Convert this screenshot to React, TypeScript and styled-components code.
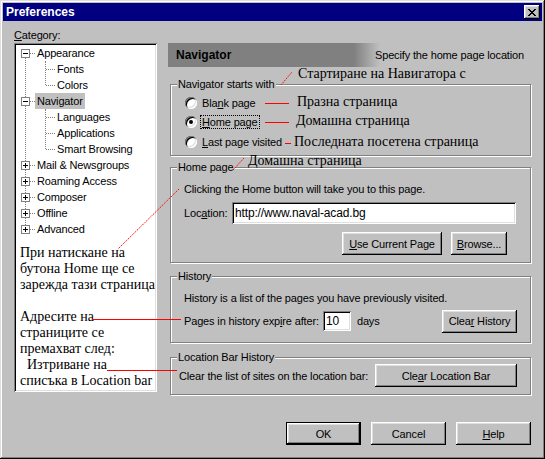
import styled, { createGlobalStyle } from 'styled-components';

const GlobalStyle = createGlobalStyle`
  html, body {
    margin: 0;
    padding: 0;
    background: #c0c0c0;
  }
  body {
    font-family: "Liberation Sans", Arial, sans-serif;
    font-size: 11px;
    letter-spacing: -0.15px;
    color: #000;
  }
  * {
    box-sizing: border-box;
  }
`;

type TreeItem = {
  label: string;
  expanded?: boolean;
  selected?: boolean;
  children?: string[];
};

const tree: TreeItem[] = [
  { label: 'Appearance', expanded: true, children: ['Fonts', 'Colors'] },
  {
    label: 'Navigator',
    expanded: true,
    selected: true,
    children: ['Languages', 'Applications', 'Smart Browsing'],
  },
  { label: 'Mail & Newsgroups' },
  { label: 'Roaming Access' },
  { label: 'Composer' },
  { label: 'Offline' },
  { label: 'Advanced' },
];

const notes = [
  { text: 'При натискане на' },
  { text: 'бутона Home ще се' },
  { text: 'зарежда тази страница' },
  { text: '' },
  { text: 'Адресите на' },
  { text: 'страниците се' },
  { text: 'премахват след:' },
  { text: 'Изтриване на', indent: 7 },
  { text: 'списъка в Location bar' },
];

const callouts = [
  { x: 298, y: 66, text: 'Стартиране на Навигатора с' },
  { x: 297, y: 94, text: 'Празна страница' },
  { x: 296, y: 113, text: 'Домашна страница' },
  { x: 294, y: 134, text: 'Последната посетена страница' },
  { x: 248, y: 153, text: 'Домашна страница' },
];

function CloseGlyph() {
  const rows = ['11000011', '01100110', '00111100', '00011000', '00111100', '01100110', '11000011'];
  return (
    <svg width="8" height="7" viewBox="0 0 8 7" shapeRendering="crispEdges">
      {rows.map((row, y) =>
        row.split('').map((c, x) => (c === '1' ? <rect key={`${x}-${y}`} x={x} y={y} width="1" height="1" fill="#000" /> : null)),
      )}
    </svg>
  );
}

function App() {
  return (
    <>
      <GlobalStyle />
      <Window>
        <TitleBar>
          <span>Preferences</span>
          <CloseButton>
            <CloseGlyph />
          </CloseButton>
        </TitleBar>

        <Body>
          <Main>
            <CategoryLabel>
              <U>C</U>ategory:
            </CategoryLabel>

            <TreeBox>
              <TreeList>
                {tree.map((item) => (
                  <div key={item.label}>
                    <TopRow>
                      <Expander $open={!!item.expanded} />
                      <Dash $width={5} />
                      <TreeLabel $selected={item.selected}>{item.label}</TreeLabel>
                    </TopRow>
                    {item.expanded && item.children && (
                      <ChildList>
                        {item.children.map((child) => (
                          <ChildRow key={child}>
                            <Dash $width={9} />
                            <TreeLabel>{child}</TreeLabel>
                          </ChildRow>
                        ))}
                      </ChildList>
                    )}
                  </div>
                ))}
              </TreeList>
              <Note>
                {notes.map((n, i) => (
                  <NoteLine key={i} $indent={n.indent ?? 0}>
                    {n.text || '\u00a0'}
                  </NoteLine>
                ))}
              </Note>
              <BorderMark />
            </TreeBox>

            <Panel>
              <PanelHeader>
                <PanelTitle>Navigator</PanelTitle>
                <span>Specify the home page location</span>
              </PanelHeader>

              <GroupBox $mt={17} $height={72}>
                <Legend>Navigator starts with</Legend>
                <RadioList>
                  <RadioRow>
                    <Radio />
                    <span>
                      Bla<U>n</U>k page
                    </span>
                  </RadioRow>
                  <RadioRow>
                    <Radio $checked />
                    <Focused>
                      <U>H</U>ome page
                    </Focused>
                  </RadioRow>
                  <RadioRow>
                    <Radio />
                    <span>
                      <U>L</U>ast page visited
                    </span>
                  </RadioRow>
                </RadioList>
              </GroupBox>

              <GroupBox $mt={11} $height={96}>
                <Legend>Home page</Legend>
                <TextLine $mt={8.5}>Clicking the Home button will take you to this page.</TextLine>
                <FieldRow $mt={5.5} $pr={14}>
                  <span>
                    Loc<U>a</U>tion:
                  </span>
                  <TextInput $width={284} $height={22} $push defaultValue="http://www.naval-acad.bg" />
                </FieldRow>
                <ButtonRow $mt={8} $pr={23}>
                  <Button $width={100}>
                    <U>U</U>se Current Page
                  </Button>
                  <Button $width={56}>
                    <U>B</U>rowse...
                  </Button>
                </ButtonRow>
              </GroupBox>

              <GroupBox $mt={13} $height={67}>
                <Legend>History</Legend>
                <TextLine $mt={8.5}>History is a list of the pages you have previously visited.</TextLine>
                <FieldRow $mt={5} $pr={13}>
                  <span>
                    Pages in history exp<U>i</U>re after:
                  </span>
                  <TextInput $width={28} $height={20} $gap={4} defaultValue="10" />
                  <Days>days</Days>
                  <Button $width={75} $push>
                    Clea<U>r</U> History
                  </Button>
                </FieldRow>
              </GroupBox>

              <GroupBox $mt={14} $height={38}>
                <Legend>Location Bar History</Legend>
                <FieldRow $mt={0} $pl={8} $pr={13}>
                  <span>Clear the list of sites on the location bar:</span>
                  <Button $width={142} $push>
                    Cle<U>a</U>r Location Bar
                  </Button>
                </FieldRow>
              </GroupBox>
            </Panel>
          </Main>

          <Footer>
            <Button $width={75} $default>
              OK
            </Button>
            <Button $width={75}>Cancel</Button>
            <Button $width={75}>
              <U>H</U>elp
            </Button>
          </Footer>
        </Body>

        <Overlay>
          <svg width="545" height="459" viewBox="0 0 545 459">
            <g stroke="#ff0000" strokeWidth="1" fill="none">
              <line x1="281" y1="85" x2="292" y2="72" strokeDasharray="1.5 1" />
              <line x1="265" y1="103.5" x2="289" y2="103.5" />
              <line x1="265" y1="122.5" x2="289" y2="122.5" />
              <line x1="285" y1="143.5" x2="291" y2="143.5" />
              <line x1="233" y1="170" x2="244" y2="158" strokeDasharray="1.5 1" />
              <line x1="179" y1="189" x2="118" y2="249" strokeDasharray="1.5 1" />
              <line x1="92" y1="319.5" x2="181" y2="319.5" />
              <line x1="107" y1="370.5" x2="177" y2="370.5" />
            </g>
          </svg>
          {callouts.map((c, i) => (
            <Callout key={i} $x={c.x} $y={c.y}>
              {c.text}
            </Callout>
          ))}
        </Overlay>
      </Window>
    </>
  );
}

export default App;

const serif = `"Liberation Serif", "DejaVu Serif", "Times New Roman", serif`;

const raised = `
  box-shadow: inset -1px -1px #000, inset 1px 1px #fff, inset -2px -2px #808080, inset 2px 2px #dfdfdf;
`;

const sunken = `
  box-shadow: inset 1px 1px #808080, inset -1px -1px #fff, inset 2px 2px #000, inset -2px -2px #dfdfdf;
`;

const Window = styled.div`
  position: relative;
  width: 545px;
  height: 459px;
  padding: 3px;
  display: flex;
  flex-direction: column;
  background: #c0c0c0;
  box-shadow: inset -1px -1px #000, inset 1px 1px #dfdfdf, inset -2px -2px #808080, inset 2px 2px #fff;
`;

const TitleBar = styled.div`
  height: 18px;
  display: flex;
  align-items: center;
  justify-content: space-between;
  padding: 0 2px 0 3px;
  background: #000080;
  color: #fff;
  font-weight: bold;
  font-size: 12px;
  letter-spacing: 0;
`;

const CloseButton = styled.div`
  width: 16px;
  height: 14px;
  display: flex;
  align-items: center;
  justify-content: center;
  background: #c0c0c0;
  ${raised}
`;

const Body = styled.div`
  flex: 1;
  display: flex;
  flex-direction: column;
  padding: 7px 10px 11px 11px;
`;

const Main = styled.div`
  display: grid;
  grid-template-columns: 143px 364px;
  grid-template-rows: 15px auto;
  column-gap: 11px;
`;

const CategoryLabel = styled.div`
  grid-column: 1;
  grid-row: 1;
  line-height: 13px;
  margin-top: 1px;
`;

const U = styled.span`
  text-decoration: underline;
  text-underline-offset: 1px;
`;

const TreeBox = styled.div`
  position: relative;
  grid-column: 1;
  grid-row: 2;
  height: 349px;
  padding: 2px;
  background: #fff;
  overflow: hidden;
  ${sunken}
`;

const BorderMark = styled.div`
  position: absolute;
  left: 1px;
  top: 257px;
  width: 1px;
  height: 43px;
  background: #000;
`;

const TreeList = styled.div`
  position: relative;

  &::before {
    content: '';
    position: absolute;
    left: 9px;
    top: 8px;
    bottom: 8px;
    border-left: 1px dotted #808080;
  }
`;

const TopRow = styled.div`
  height: 16px;
  display: flex;
  align-items: center;
  padding-left: 5px;
`;

const Expander = styled.span<{ $open: boolean }>`
  position: relative;
  z-index: 1;
  width: 9px;
  height: 9px;
  flex: none;
  border: 1px solid #808080;
  background: #fff;

  &::before {
    content: '';
    position: absolute;
    left: 1px;
    top: 3px;
    width: 5px;
    height: 1px;
    background: #000;
  }

  &::after {
    content: '';
    display: ${(p) => (p.$open ? 'none' : 'block')};
    position: absolute;
    left: 3px;
    top: 1px;
    width: 1px;
    height: 5px;
    background: #000;
  }
`;

const Dash = styled.span<{ $width: number }>`
  width: ${(p) => p.$width}px;
  flex: none;
  border-top: 1px dotted #808080;
`;

const TreeLabel = styled.span<{ $selected?: boolean }>`
  padding: 0 2px;
  line-height: 16px;
  white-space: nowrap;
  background: ${(p) => (p.$selected ? '#c0c0c0' : 'transparent')};
`;

const ChildList = styled.div`
  position: relative;

  &::before {
    content: '';
    position: absolute;
    left: 29px;
    top: 0;
    bottom: 8px;
    border-left: 1px dotted #808080;
  }
`;

const ChildRow = styled.div`
  height: 16px;
  display: flex;
  align-items: center;
  padding-left: 30px;
`;

const Note = styled.div`
  margin-top: 8px;
  padding-left: 4px;
  font-family: ${serif};
  font-size: 14px;
  line-height: 16px;
  letter-spacing: 0;
  white-space: nowrap;
`;

const NoteLine = styled.div<{ $indent: number }>`
  padding-left: ${(p) => p.$indent}px;
`;

const Panel = styled.div`
  grid-column: 2;
  grid-row: 2;
  display: flex;
  flex-direction: column;
`;

const PanelHeader = styled.div`
  height: 24px;
  display: flex;
  align-items: center;
  justify-content: space-between;
  padding: 0 8px;
  background: linear-gradient(to right, #808080 0, #808080 186px, #c0c0c0 212px);
`;

const PanelTitle = styled.span`
  font-weight: bold;
  font-size: 12px;
  letter-spacing: 0;
`;

const GroupBox = styled.div<{ $mt: number; $height: number }>`
  height: ${(p) => p.$height}px;
  margin: ${(p) => p.$mt}px 1px 0 2px;
  display: flex;
  flex-direction: column;
  border: 1px solid #808080;
  box-shadow: inset 1px 1px #fff, 1px 1px #fff;
`;

const Legend = styled.div`
  align-self: flex-start;
  margin: -7px 0 0 6px;
  padding: 0 1px;
  line-height: 13px;
  background: #c0c0c0;
`;

const RadioList = styled.div`
  margin-top: 2px;
  padding-left: 14px;
`;

const RadioRow = styled.div`
  height: 19.5px;
  display: flex;
  align-items: center;
  gap: 5px;
`;

const Radio = styled.span<{ $checked?: boolean }>`
  width: 12px;
  height: 12px;
  flex: none;
  display: flex;
  align-items: center;
  justify-content: center;
  border-radius: 50%;
  background: #fff;
  ${sunken}

  &::after {
    content: '';
    width: 4px;
    height: 4px;
    border-radius: 50%;
    background: ${(p) => (p.$checked ? '#000' : 'transparent')};
  }
`;

const Focused = styled.span`
  margin-left: -1px;
  padding: 0 1px;
  line-height: 12px;
  outline: 1px dotted #000;
`;

const TextLine = styled.div<{ $mt: number }>`
  margin-top: ${(p) => p.$mt}px;
  padding-left: 13px;
  line-height: 13px;
`;

const FieldRow = styled.div<{ $mt: number; $pl?: number; $pr: number }>`
  height: 23px;
  margin-top: ${(p) => p.$mt}px;
  padding: 0 ${(p) => p.$pr}px 0 ${(p) => p.$pl ?? 13}px;
  display: flex;
  align-items: center;
`;

const TextInput = styled.input<{ $width: number; $height: number; $gap?: number; $push?: boolean }>`
  width: ${(p) => p.$width}px;
  height: ${(p) => p.$height}px;
  margin-left: ${(p) => (p.$push ? 'auto' : `${p.$gap ?? 0}px`)};
  padding: 0 3px;
  border: 0;
  outline: none;
  background: #fff;
  font-family: inherit;
  font-size: 12px;
  letter-spacing: -0.15px;
  color: #000;
  ${sunken}
`;

const Days = styled.span`
  margin-left: 6px;
`;

const ButtonRow = styled.div<{ $mt: number; $pr: number }>`
  margin-top: ${(p) => p.$mt}px;
  padding-right: ${(p) => p.$pr}px;
  display: flex;
  justify-content: flex-end;
  gap: 9px;
`;

const Button = styled.button<{ $width: number; $push?: boolean; $default?: boolean }>`
  width: ${(p) => p.$width}px;
  height: 23px;
  margin-left: ${(p) => (p.$push ? 'auto' : '0')};
  padding: 0;
  border: ${(p) => (p.$default ? '1px solid #000' : '0')};
  background: #c0c0c0;
  font-family: inherit;
  font-size: 11px;
  letter-spacing: -0.15px;
  color: #000;
  ${raised}
`;

const Footer = styled.div`
  margin-top: auto;
  padding-right: 1px;
  display: flex;
  justify-content: flex-end;
  gap: 10px;
`;

const Overlay = styled.div`
  position: absolute;
  inset: 0;
  pointer-events: none;

  svg {
    position: absolute;
    left: 0;
    top: 0;
  }
`;

const Callout = styled.span<{ $x: number; $y: number }>`
  position: absolute;
  left: ${(p) => p.$x}px;
  top: ${(p) => p.$y}px;
  font-family: ${serif};
  font-size: 14px;
  line-height: 16px;
  letter-spacing: 0;
  white-space: nowrap;
`;
